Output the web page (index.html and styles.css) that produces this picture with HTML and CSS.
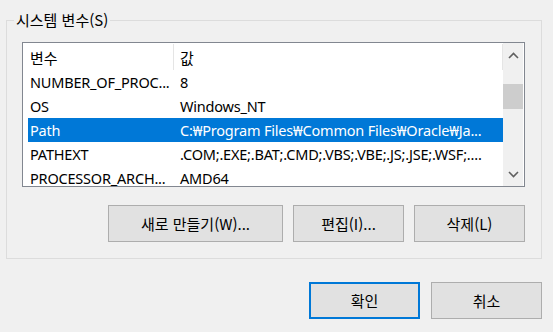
FILE: index.html
```html
<!DOCTYPE html>
<html lang="ko">
<head>
<meta charset="utf-8">
<link rel="stylesheet" href="styles.css">
</head>
<body>
<fieldset class="group">
  <legend class="group-title">시스템 변수(S)</legend>
  <div class="listbox">
    <div class="list">
      <div class="list-header">
        <div class="cell col1">변수</div>
        <div class="cell col2">값</div>
      </div>
      <div class="row"><div class="cell col1">NUMBER_OF_PROC...</div><div class="cell col2">8</div></div>
      <div class="row"><div class="cell col1">OS</div><div class="cell col2">Windows_NT</div></div>
      <div class="row selected"><div class="cell col1">Path</div><div class="cell col2">C:₩Program Files₩Common Files₩Oracle₩Ja...</div></div>
      <div class="row"><div class="cell col1">PATHEXT</div><div class="cell col2">.COM;.EXE;.BAT;.CMD;.VBS;.VBE;.JS;.JSE;.WSF;....</div></div>
      <div class="row"><div class="cell col1">PROCESSOR_ARCH...</div><div class="cell col2">AMD64</div></div>
    </div>
    <div class="scrollbar">
      <div class="arrow">
        <svg width="11" height="7" viewBox="0 0 11 7"><path d="M1 6 L5.5 1.5 L10 6" fill="none" stroke="#606060" stroke-width="1.6"/></svg>
      </div>
      <div class="track">
        <div class="thumb"></div>
      </div>
      <div class="arrow">
        <svg width="11" height="7" viewBox="0 0 11 7"><path d="M1 1 L5.5 5.5 L10 1" fill="none" stroke="#606060" stroke-width="1.6"/></svg>
      </div>
    </div>
  </div>
  <div class="group-buttons">
    <button class="btn wide">새로 만들기(W)...</button>
    <button class="btn">편집(I)...</button>
    <button class="btn">삭제(L)</button>
  </div>
</fieldset>
<div class="dialog-buttons">
  <button class="btn default">확인</button>
  <button class="btn">취소</button>
</div>
</body>
</html>
```

FILE: styles.css
```css
* { box-sizing: border-box; }
html, body {
  margin: 0;
  padding: 0;
  background: #f0f0f0;
  width: 553px;
  height: 332px;
  overflow: hidden;
}
body {
  font-family: "Noto Sans", "Noto Sans CJK KR", sans-serif;
  font-size: 15px;
  color: #000;
}
.group {
  margin: 10px 11px 0 6px;
  padding: 12px 16px 14px 15px;
  border: 1px solid #dcdcdc;
  min-width: 0;
  height: 249px;
}
.group-title {
  margin-left: -8px;
  padding: 0 2px;
  line-height: 20px;
  height: 20px;
  font-family: "Noto Sans CJK KR", sans-serif;
}
.listbox {
  display: flex;
  height: 145px;
  border: 1px solid #828790;
  background: #fff;
}
.list {
  flex: 1;
  padding-left: 5px;
  overflow: hidden;
  font-size: 14.5px;
  letter-spacing: -0.2px;
}
.list-header {
  display: flex;
  height: 27px;
  align-items: center;
  font-family: "Noto Sans CJK KR", sans-serif;
  font-size: 15px;
  letter-spacing: 0;
}
.list-header .col1 {
  border-right: 1px solid #e5e5e5;
  height: 26px;
  margin-top: 1px;
  display: flex;
  align-items: center;
}
.list-header .col2 {
  border-right: 1px solid #e5e5e5;
  height: 26px;
  margin-top: 1px;
  display: flex;
  align-items: center;
  flex: 1;
}
.row {
  display: flex;
  height: 24px;
  align-items: center;
  white-space: nowrap;
}
.cell {
  overflow: hidden;
  white-space: nowrap;
}
.col1 {
  width: 146px;
  padding-left: 2px;
}
.col2 {
  flex: 1;
  padding-left: 6px;
}
.row.selected {
  background: #0078d7;
  color: #fff;
}
.scrollbar {
  width: 20px;
  background: #f0f0f0;
  display: flex;
  flex-direction: column;
  margin-right: 1px;
}
.arrow {
  height: 24px;
  display: flex;
  align-items: center;
  justify-content: center;
}
.track {
  flex: 1;
  padding-top: 17px;
}
.thumb {
  height: 25px;
  background: #cdcdcd;
}
.group-buttons {
  display: flex;
  justify-content: flex-end;
  gap: 10px;
  margin-top: 18px;
}
.btn {
  width: 111px;
  height: 37px;
  background: #e1e1e1;
  border: 1px solid #adadad;
  border-radius: 0;
  font-family: "Noto Sans CJK KR", sans-serif;
  font-size: 15px;
  color: #000;
  padding: 0;
}
.btn.wide { width: 175px; }
.btn.default { border: 2px solid #0078d7; }
.dialog-buttons {
  display: flex;
  justify-content: flex-end;
  gap: 11px;
  margin-top: 23px;
  padding-right: 11px;
}
```
